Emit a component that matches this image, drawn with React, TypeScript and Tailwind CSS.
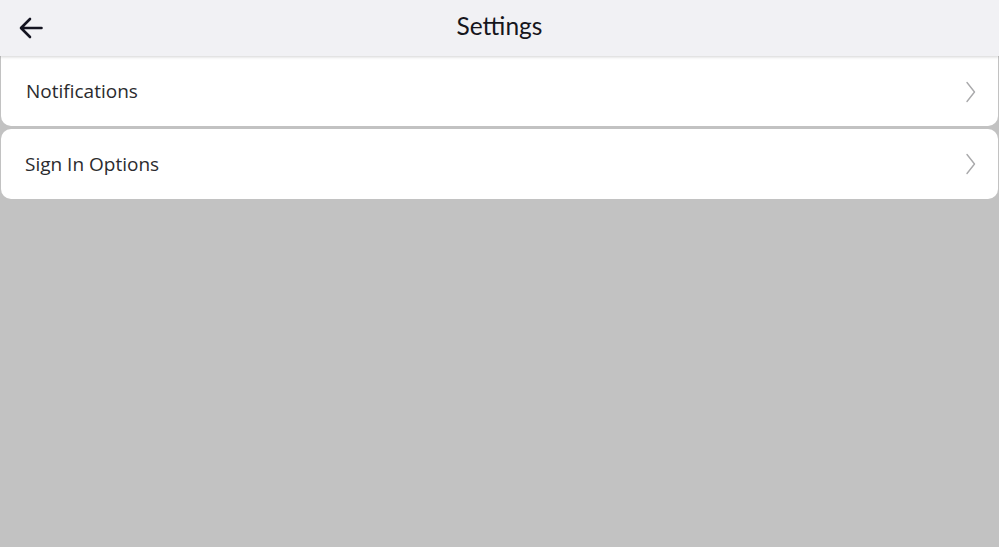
const ITEMS = ['Notifications', 'Sign In Options']

function Chevron() {
  return (
    <svg width="12" height="22" viewBox="0 0 12 22" fill="none" className="shrink-0">
      <path d="M2 1.5 L9.5 11 L2 20.5" stroke="#a9a9ab" strokeWidth="1.4" strokeLinecap="round" strokeLinejoin="round" />
    </svg>
  )
}

export default function App() {
  return (
    <div className="w-[999px] h-[547px] bg-[#c2c2c2] flex flex-col overflow-hidden">
      {/* Header */}
      <header className="relative z-10 h-[56px] shrink-0 bg-[#f1f1f4] flex items-center shadow-[0_1px_3px_rgba(0,0,0,0.18)]">
        <button className="pl-[19px] pr-2 h-full flex items-center">
          <svg width="24" height="22" viewBox="0 0 24 22" fill="none">
            <path d="M22.5 11 H2.5 M11 2 L2 11 L11 20" stroke="#141420" strokeWidth="2.6" strokeLinecap="round" strokeLinejoin="round" />
          </svg>
        </button>
        <h1 className="absolute left-1/2 -translate-x-1/2 top-[8px] text-[24.5px] text-[#16161c] font-['Lato',sans-serif]">
          Settings
        </h1>
      </header>

      {/* List */}
      <div className="flex flex-col gap-[3px] px-[1px]">
        {ITEMS.map((label, i) => (
          <div
            key={label}
            className={`h-[70px] bg-white flex items-center justify-between pr-[21px] ${i === 0 ? 'rounded-b-[10px] pl-[25px] pt-[1px]' : 'rounded-[10px] pl-[24px]'}`}
          >
            <span className="text-[19px] text-[#2b2b2e] font-['Open_Sans',sans-serif]">{label}</span>
            <Chevron />
          </div>
        ))}
      </div>
    </div>
  )
}
